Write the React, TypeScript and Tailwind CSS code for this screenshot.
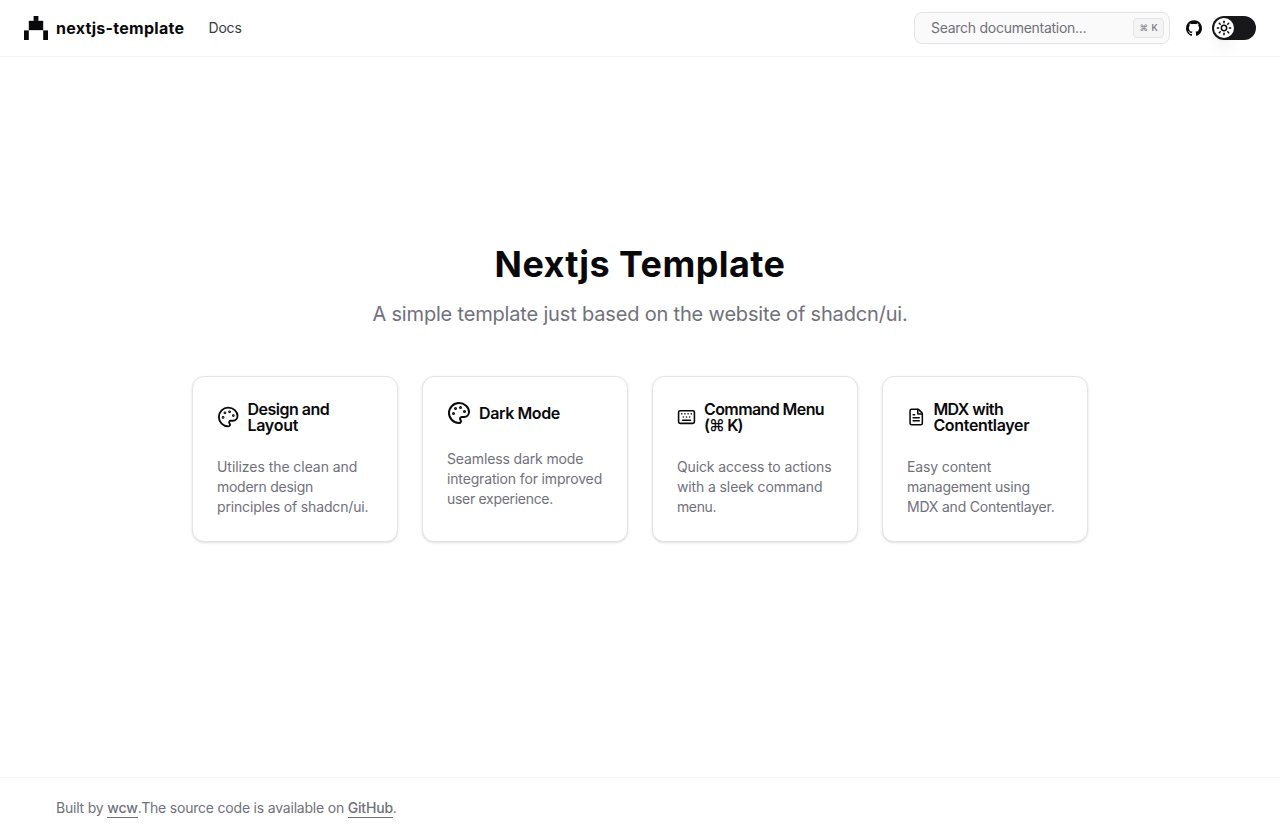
import React from "react";
import { FileText, Keyboard, Palette, Sun } from "lucide-react";

type Line = { text: React.ReactNode; tracking: string };
type Feature = {
  icon: React.ReactNode;
  title: Line[];
  body: Line[];
};

const features: Feature[] = [
  {
    icon: <Palette className="h-6 w-[22.4px] shrink-0" />,
    title: [
      { text: "Design and", tracking: "tracking-[-0.5px]" },
      { text: "Layout", tracking: "tracking-[-0.25px]" },
    ],
    body: [
      { text: "Utilizes the clean and", tracking: "tracking-[-0.06px]" },
      { text: "modern design", tracking: "tracking-[-0.27px]" },
      { text: "principles of shadcn/ui.", tracking: "tracking-[-0.16px]" },
    ],
  },
  {
    icon: <Palette className="h-6 w-6 shrink-0" />,
    title: [{ text: "Dark Mode", tracking: "tracking-[-0.4px]" }],
    body: [
      { text: "Seamless dark mode", tracking: "tracking-[-0.13px]" },
      { text: "integration for improved", tracking: "tracking-[-0.15px]" },
      { text: "user experience.", tracking: "tracking-[-0.3px]" },
    ],
  },
  {
    icon: <Keyboard className="h-6 w-[19px] shrink-0" />,
    title: [
      { text: "Command Menu", tracking: "tracking-[-0.59px]" },
      {
        text: (
          <>
            (<span className="font-medium">⌘</span> K)
          </>
        ),
        tracking: "tracking-[-0.9px]",
      },
    ],
    body: [
      { text: "Quick access to actions", tracking: "tracking-[-0.13px]" },
      { text: "with a sleek command", tracking: "tracking-[-0.12px]" },
      { text: "menu.", tracking: "tracking-[-0.4px]" },
    ],
  },
  {
    icon: <FileText className="h-6 w-[18.4px] shrink-0" />,
    title: [
      { text: "MDX with", tracking: "tracking-[-0.55px]" },
      { text: "Contentlayer", tracking: "tracking-[-0.33px]" },
    ],
    body: [
      { text: "Easy content", tracking: "tracking-[-0.12px]" },
      { text: "management using", tracking: "tracking-[-0.2px]" },
      { text: "MDX and Contentlayer.", tracking: "tracking-[-0.21px]" },
    ],
  },
];

function Logo() {
  return (
    <svg viewBox="0 0 5 5" className="h-6 w-6" fill="#09090b">
      <rect x="2" y="0" width="1" height="1.02" />
      <rect x="1" y="1" width="3" height="1.95" />
      <rect x="0" y="3" width="1" height="2" />
      <rect x="4" y="3" width="1" height="2" />
    </svg>
  );
}

function GitHubMark() {
  return (
    <svg viewBox="0 0 438.549 438.549" className="h-4 w-4" fill="#09090b">
      <path d="M409.132 114.573c-19.608-33.596-46.205-60.194-79.798-79.8-33.598-19.607-70.277-29.408-110.063-29.408-39.781 0-76.472 9.804-110.063 29.408-33.596 19.605-60.192 46.204-79.8 79.8C9.803 148.168 0 184.854 0 224.63c0 47.78 13.94 90.745 41.827 128.906 27.884 38.164 63.906 64.572 108.063 79.227 5.14.954 8.945.283 11.419-1.996 2.475-2.282 3.711-5.14 3.711-8.562 0-.571-.049-5.708-.144-15.417a2549.81 2549.81 0 01-.144-25.406l-6.567 1.136c-4.187.767-9.469 1.092-15.846 1-6.374-.089-12.991-.757-19.842-1.999-6.854-1.231-13.229-4.086-19.13-8.559-5.898-4.473-10.085-10.328-12.56-17.556l-2.855-6.57c-1.903-4.374-4.899-9.233-8.992-14.559-4.093-5.331-8.232-8.945-12.419-10.848l-1.999-1.431c-1.332-.951-2.568-2.098-3.711-3.429-1.142-1.331-1.997-2.663-2.568-3.997-.572-1.335-.098-2.43 1.427-3.289 1.525-.859 4.281-1.276 8.28-1.276l5.708.853c3.807.763 8.516 3.042 14.133 6.851 5.614 3.806 10.229 8.754 13.846 14.842 4.38 7.806 9.657 13.754 15.846 17.847 6.184 4.093 12.419 6.136 18.699 6.136 6.28 0 11.704-.476 16.274-1.423 4.565-.952 8.848-2.383 12.847-4.285 1.713-12.758 6.377-22.559 13.988-29.41-10.848-1.14-20.601-2.857-29.264-5.14-8.658-2.286-17.605-5.996-26.835-11.14-9.235-5.137-16.896-11.516-22.985-19.126-6.09-7.614-11.088-17.61-14.987-29.979-3.901-12.374-5.852-26.648-5.852-42.826 0-23.035 7.52-42.637 22.557-58.817-7.044-17.318-6.379-36.732 1.997-58.24 5.52-1.715 13.706-.428 24.554 3.853 10.85 4.283 18.794 7.952 23.84 10.994 5.046 3.041 9.089 5.618 12.135 7.708 17.705-4.947 35.976-7.421 54.818-7.421s37.117 2.474 54.823 7.421l10.849-6.849c7.419-4.57 16.18-8.758 26.262-12.565 10.088-3.805 17.802-4.853 23.134-3.138 8.562 21.509 9.325 40.922 2.279 58.24 15.036 16.18 22.559 35.787 22.559 58.817 0 16.178-1.958 30.497-5.853 42.966-3.9 12.471-8.941 22.457-15.125 29.979-6.191 7.521-13.901 13.85-23.131 18.986-9.232 5.14-18.182 8.85-26.84 11.136-8.662 2.286-18.415 4.004-29.263 5.146 9.894 8.562 14.842 22.077 14.842 40.539v60.237c0 3.422 1.19 6.279 3.572 8.562 2.379 2.279 6.136 2.95 11.276 1.995 44.163-14.653 80.185-41.062 108.068-79.226 27.88-38.161 41.825-81.126 41.825-128.906-.01-39.771-9.818-76.454-29.414-110.049z" />
    </svg>
  );
}

function Lines({ lines }: { lines: Line[] }) {
  return (
    <>
      {lines.map((line, i) => (
        <span key={i} className={`block whitespace-nowrap ${line.tracking}`}>
          {line.text}
        </span>
      ))}
    </>
  );
}

export default function App() {
  return (
    <div className="flex h-[838px] flex-col bg-white font-['Inter','Liberation_Sans',sans-serif] text-[#09090b] antialiased">
      <header className="flex h-[57px] shrink-0 items-center border-b border-[#f4f4f5] px-6">
        <Logo />
        <span className="ml-2 w-32 text-base font-bold tracking-[0.27px] whitespace-nowrap">nextjs-template</span>
        <a className="ml-[24.5px] text-sm tracking-[-0.2px] text-[#3a3a3c]">Docs</a>
        <div className="ml-auto flex items-center">
          <button className="flex h-8 w-64 items-center justify-between rounded-lg border border-[#e4e4e7] bg-[#fafafa] pr-[5px] pl-4 text-sm text-[#71717a]">
            <span className="tracking-[-0.27px]">Search documentation...</span>
            <kbd className="flex h-5 w-[31px] items-center justify-center gap-[3.5px] rounded border border-[#e4e4e7] bg-[#f4f4f5] font-['Inter',sans-serif] text-[9px] font-medium">
              <span className="text-[8.5px] font-normal">⌘</span>
              <span>K</span>
            </kbd>
          </button>
          <a className="ml-4">
            <GitHubMark />
          </a>
          <button className="ml-2.5 flex h-6 w-11 items-center rounded-full bg-[#18181b] px-0.5">
            <span className="flex h-5 w-5 items-center justify-center rounded-full bg-white shadow-lg">
              <Sun className="h-4 w-4" strokeWidth={2.2} />
            </span>
          </button>
        </div>
      </header>

      <main className="flex flex-1 flex-col items-center pt-[187px]">
        <h1 className="text-4xl leading-10 font-bold tracking-[0.42px] whitespace-nowrap">Nextjs Template</h1>
        <p className="mt-4 text-xl leading-7 tracking-[-0.175px] whitespace-nowrap text-[#71717a]">
          A simple template just based on the website of shadcn/ui.
        </p>
        <div className="mt-12 grid w-[896px] grid-cols-4 gap-6">
          {features.map((f, i) => (
            <section key={i} className="h-[166px] rounded-xl border border-[#e4e4e7] bg-white p-6 shadow">
              <h3 className="flex items-center gap-2 text-base leading-none font-semibold">
                {f.icon}
                <span>
                  <Lines lines={f.title} />
                </span>
              </h3>
              <p className="mt-6 text-sm leading-5 text-[#71717a]">
                <Lines lines={f.body} />
              </p>
            </section>
          ))}
        </div>
      </main>

      <footer className="flex h-[61px] shrink-0 items-center border-t border-[#f4f4f5] px-14 text-sm text-[#71717a]">
        <p className="tracking-[-0.2px] whitespace-nowrap">
          Built by <a className="border-b border-[#71717a] pb-px font-medium tracking-[-0.1px]">wcw</a>.The source code is available on{" "}
          <a className="border-b border-[#71717a] pb-px font-medium">GitHub</a>.
        </p>
      </footer>
    </div>
  );
}
